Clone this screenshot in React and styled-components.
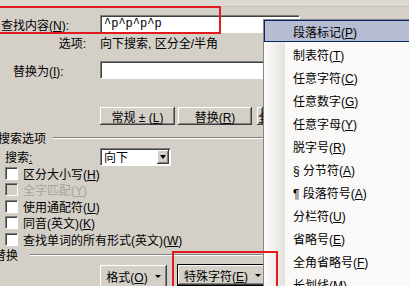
import React from 'react';
import styled, { createGlobalStyle, css } from 'styled-components';

const Global = createGlobalStyle`
  html, body { margin: 0; padding: 0; background: #d4d0c8; }
  #root { width: 409px; height: 286px; overflow: hidden; }
`;

const Dialog = styled.div`
  position: relative;
  width: 409px;
  height: 286px;
  overflow: hidden;
  background: #d4d0c8;
  font-family: "Liberation Sans", "Noto Sans CJK SC", sans-serif;
  font-size: 12px;
  color: #000;
  display: flex;
  flex-direction: column;
`;

const TopStrip = styled.div`
  flex: none;
  height: 6px;
  background: #dddad4;
  border-bottom: 1px solid #c8c4bb;
`;

const Row = styled.div`
  flex: none;
  display: flex;
  align-items: ${p => p.$align || 'center'};
  height: ${p => p.$h}px;
  margin-top: ${p => p.$mt || 0}px;
  padding-left: ${p => p.$pl || 0}px;
  white-space: nowrap;
`;

const Label = styled.span`
  flex: none;
  width: ${p => p.$w}px;
  text-align: ${p => p.$right ? 'right' : 'left'};
  padding-right: ${p => p.$pr || 0}px;
  box-sizing: border-box;
  white-space: nowrap;
`;

const Key = styled.span`
  text-decoration: underline;
`;

const TextInput = styled.div`
  flex: none;
  box-sizing: border-box;
  width: 200px;
  height: 18px;
  background: #fff;
  border-top: 1px solid #808080;
  border-left: 1px solid #808080;
  border-right: 1px solid #fff;
  border-bottom: 1px solid #fff;
  box-shadow: inset 1px 1px #404040;
  padding-left: 3px;
  display: flex;
  align-items: center;
  font-family: "Liberation Mono", monospace;
  font-size: 12px;
`;

const Button = styled.div`
  flex: none;
  box-sizing: border-box;
  width: ${p => p.$w}px;
  height: ${p => p.$h || 18}px;
  margin-top: ${p => p.$mt || 0}px;
  margin-left: ${p => p.$ml || 0}px;
  display: flex;
  align-items: center;
  justify-content: ${p => p.$left ? 'flex-start' : 'center'};
  padding-left: ${p => p.$pl || 0}px;
  gap: 7px;
  overflow: hidden;
  white-space: nowrap;
  background: #d4d0c8;
  box-shadow: inset -1px -1px #404040, inset 1px 1px #fff,
    inset -2px -2px #808080, inset 2px 2px #d4d0c8;
  ${p => p.$focus && css`
    border: 1px solid #000;
    box-shadow: inset -1px -1px #404040, inset 1px 1px #fff,
      inset -2px -2px #808080;
  `}
`;

const Caret = styled.span`
  flex: none;
  width: 0;
  height: 0;
  border-left: 3px solid transparent;
  border-right: 3px solid transparent;
  border-top: 3px solid #000;
`;

const GroupHead = styled.div`
  flex: none;
  display: flex;
  align-items: center;
  height: ${p => p.$h}px;
  margin-top: ${p => p.$mt || 0}px;
  margin-left: ${p => p.$ml || 0}px;
  gap: ${p => p.$gap || 6}px;
  white-space: nowrap;
`;

const Etch = styled.div`
  flex: 1;
  height: 0;
  margin-top: 2px;
  border-top: 1px solid #808080;
  border-bottom: 1px solid #fff;
`;

const Select = styled.div`
  flex: none;
  box-sizing: border-box;
  width: 71px;
  height: 18px;
  background: #fff;
  border-top: 1px solid #808080;
  border-left: 1px solid #808080;
  border-right: 1px solid #fff;
  border-bottom: 1px solid #fff;
  box-shadow: inset 1px 1px #404040;
  display: flex;
  align-items: center;
  justify-content: space-between;
  padding: 1px 1px 1px 3px;
`;

const SelectBtn = styled.div`
  width: 12px;
  height: 14px;
  box-sizing: border-box;
  display: flex;
  align-items: center;
  justify-content: center;
  background: #d4d0c8;
  box-shadow: inset -1px -1px #404040, inset 1px 1px #fff,
    inset -2px -2px #808080;
`;

const SelTri = styled.span`
  width: 0;
  height: 0;
  border-left: 3.5px solid transparent;
  border-right: 3.5px solid transparent;
  border-top: 4px solid #000;
`;

const CheckRow = styled.div`
  flex: none;
  display: flex;
  align-items: center;
  height: ${p => p.$h}px;
  padding-left: 5px;
  gap: 5px;
  white-space: nowrap;
  color: ${p => p.$disabled ? '#a6a39c' : '#000'};
`;

const Box = styled.span`
  flex: none;
  width: 11px;
  height: 11px;
  background: ${p => p.$disabled ? '#d4d0c8' : '#fff'};
  border-top: 1px solid #808080;
  border-left: 1px solid #808080;
  border-right: 1px solid #fff;
  border-bottom: 1px solid #fff;
  box-shadow: inset 1px 1px #404040;
`;

const Menu = styled.div`
  position: absolute;
  left: 263px;
  top: 19px;
  width: 170px;
  height: 300px;
  box-sizing: border-box;
  border: 1px solid #868686;
  background: linear-gradient(to right, #fdfdfc 0, #e4e2dd 21px, #faf9f7 21px);
  display: flex;
  flex-direction: column;
`;

const MenuItem = styled.div`
  flex: none;
  box-sizing: border-box;
  height: 23px;
  display: flex;
  align-items: center;
  padding-left: 29px;
  white-space: nowrap;
  font-size: 12px;
  ${p => p.$active && css`
    height: 22px;
    margin-bottom: 1px;
    padding-left: 28px;
    background: #b6bdd2;
    border: 1px solid #0a246a;
  `}
`;

const Mark = styled.div`
  position: absolute;
  box-sizing: border-box;
  left: ${p => p.$x}px;
  top: ${p => p.$y}px;
  width: ${p => p.$w}px;
  height: ${p => p.$h}px;
  border: 2px solid #e11b20;
  pointer-events: none;
`;

const menuItems = [
  ['段落标记', 'P'],
  ['制表符', 'T'],
  ['任意字符', 'C'],
  ['任意数字', 'G'],
  ['任意字母', 'Y'],
  ['脱字号', 'R'],
  ['§  分节符', 'A'],
  ['¶ 段落符号', 'A'],
  ['分栏符', 'U'],
  ['省略号', 'E'],
  ['全角省略号', 'F'],
  ['长划线', 'M'],
];

const checks = [
  { t: '区分大小写', k: 'H', h: 16 },
  { t: '全字匹配', k: 'Y', h: 17, d: true },
  { t: '使用通配符', k: 'U', h: 16 },
  { t: '同音(英文)', k: 'K', h: 17 },
  { t: '查找单词的所有形式(英文)', k: 'W', h: 17 },
];

export default function App() {
  return (
    <Dialog>
      <Global />
      <TopStrip />
      <Row $h={18} $mt={8} $pl={1}>
        <Label $w={99}>查找内容(<Key>N</Key>):</Label>
        <TextInput>^p^p^p^p</TextInput>
      </Row>
      <Row $h={18}>
        <Label $w={100} $right $pr={14}>选项:</Label>
        <span>向下搜索, 区分全/半角</span>
      </Row>
      <Row $h={18} $mt={10} $pl={13}>
        <Label $w={87}>替换为(<Key>I</Key>):</Label>
        <TextInput />
      </Row>
      <Row $h={18} $mt={28} $pl={100}>
        <Button $w={75}><span>常规 ± (<Key>L</Key>)</span></Button>
        <Button $w={74} $ml={3}><span>替换(<Key>R</Key>)</span></Button>
        <Button $w={6} $ml={5} $left $pl={1}><span>全</span></Button>
      </Row>
      <GroupHead $h={14} $mt={5} $ml={-2} $gap={7}>
        <span>搜索选项</span>
        <Etch />
      </GroupHead>
      <Row $h={17} $mt={4} $pl={5}>
        <Label $w={95}>搜索<Key>:</Key></Label>
        <Select>
          <span>向下</span>
          <SelectBtn><SelTri /></SelectBtn>
        </Select>
      </Row>
      {checks.map(c => (
        <CheckRow key={c.t} $h={c.h} $disabled={c.d}>
          <Box $disabled={c.d} />
          <span>{c.t}(<Key>{c.k}</Key>)</span>
        </CheckRow>
      ))}
      <GroupHead $h={12} $ml={-6} $gap={12}>
        <span>替换</span>
        <Etch />
      </GroupHead>
      <Row $h={23} $mt={4} $pl={100} $align="flex-start">
        <Button $w={67} $h={23} $mt={1}><span>格式(<Key>O</Key>)</span><Caret /></Button>
        <Button $w={91} $h={22} $ml={10} $focus><span>特殊字符(<Key>E</Key>)</span><Caret /></Button>
      </Row>

      <Menu>
        {menuItems.map(([t, k], i) => (
          <MenuItem key={i} $active={i === 0}>
            <span>{t}(<Key>{k}</Key>)</span>
          </MenuItem>
        ))}
      </Menu>

      <Mark $x={-4} $y={6} $w={225} $h={28} />
      <Mark $x={172} $y={251} $w={106} $h={45} />
    </Dialog>
  );
}
